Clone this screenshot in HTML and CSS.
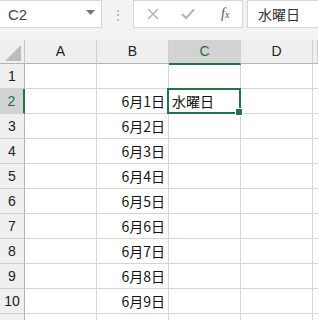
FILE: index.html
```html
<!DOCTYPE html>
<html lang="ja">
<head>
  <meta charset="UTF-8">
  <meta name="viewport" content="width=device-width, initial-scale=1.0">
  <title>Sheet</title>
  <link rel="stylesheet" href="styles.css">
</head>
<body>
  <div class="toolbar">
    <div class="name-box">
      <span>C2</span>
      <svg class="caret" width="9" height="5" viewBox="0 0 9 5"><polygon points="0,0 9,0 4.5,5" fill="#777"/></svg>
    </div>
    <div class="grip">⋮</div>
    <div class="formula-btns">
      <svg width="12" height="12" viewBox="0 0 12 12"><path d="M1 1 L11 11 M11 1 L1 11" stroke="#b5b5b5" stroke-width="1.6" fill="none"/></svg>
      <svg width="14" height="12" viewBox="0 0 14 12"><path d="M1 6 L5 10 L13 1.5" stroke="#b5b5b5" stroke-width="2" fill="none"/></svg>
      <span class="fx">f<sub>x</sub></span>
    </div>
    <div class="formula-input">水曜日</div>
  </div>

  <div class="sheet">
    <div class="grid" id="grid"></div>
    <div class="selection"><span class="handle"></span></div>
  </div>

  <script>
    const grid = document.getElementById('grid');
    const cols = ['A', 'B', 'C', 'D', ''];

    let html = '<div class="corner"><svg width="16" height="16" viewBox="0 0 16 16"><polygon points="16,0 16,16 0,16" fill="#bdbdbd"/></svg></div>';
    cols.forEach(c => {
      html += `<div class="col-head${c === 'C' ? ' active' : ''}">${c}</div>`;
    });

    for (let r = 1; r <= 11; r++) {
      html += `<div class="row-head${r === 2 ? ' active' : ''}">${r <= 10 ? r : ''}</div>`;
      cols.forEach(c => {
        let text = '';
        let cls = 'cell';
        if (c === 'B' && r >= 2 && r <= 10) {
          text = `6月${r - 1}日`;
          cls += ' num';
        }
        if (c === 'C' && r === 2) text = '水曜日';
        html += `<div class="${cls}">${text}</div>`;
      });
    }
    grid.innerHTML = html;
  </script>
</body>
</html>
```

FILE: styles.css
```css
html, body {
  overflow: hidden;
}

body {
  margin: 0;
  width: 318px;
  height: 320px;
  background: #fff;
  font-family: "Noto Sans CJK JP", "Noto Sans", sans-serif;
}

.toolbar {
  height: 40px;
  background: #f3f3f3;
  display: flex;
  align-items: flex-start;
}

.name-box {
  width: 102px;
  height: 28px;
  background: #fff;
  border: 1px solid #d6d6d6;
  border-left: none;
  display: flex;
  align-items: center;
  justify-content: space-between;
  padding: 0 6px 0 8px;
  box-sizing: border-box;
  font-family: "Liberation Sans", "Noto Sans", sans-serif;
  font-size: 15px;
  color: #444;
}

.caret {
  margin-top: -4px;
}

.grip {
  width: 31px;
  height: 29px;
  line-height: 28px;
  text-align: center;
  color: #b0b0b0;
  font-size: 14px;
}

.formula-btns {
  width: 110px;
  height: 28px;
  background: #fff;
  border: 1px solid #d6d6d6;
  box-sizing: border-box;
  display: flex;
  align-items: center;
  padding-left: 13px;
  gap: 22px;
}

.fx {
  font-family: "Liberation Serif", serif;
  font-style: italic;
  font-size: 14px;
  color: #555;
  margin-left: 4px;
}

.fx sub {
  font-size: 10px;
  vertical-align: 0;
}

.formula-input {
  margin-left: 4px;
  flex: 1;
  height: 28px;
  background: #fff;
  border: 1px solid #d6d6d6;
  border-right: none;
  box-sizing: border-box;
  padding-left: 10px;
  line-height: 26px;
  font-size: 14px;
  color: #333;
}

.sheet {
  position: relative;
  height: 280px;
  overflow: hidden;
}

.grid {
  display: grid;
  grid-template-columns: 25px 72px 72px 72px 72px 5px;
  grid-template-rows: 24px repeat(11, 25px);
}

.corner {
  background: #efefef;
  border-right: 1px solid #c8c8c8;
  border-bottom: 1px solid #b4b4b4;
  display: flex;
  align-items: flex-end;
  justify-content: flex-end;
  padding: 0 3px 2px 0;
}

.col-head {
  background: #efefef;
  border-right: 1px solid #d0d0d0;
  border-bottom: 1px solid #b4b4b4;
  text-align: center;
  line-height: 23px;
  font-family: "Liberation Sans", sans-serif;
  font-size: 14px;
  color: #222;
}

.col-head.active {
  background: #d2d2d2;
  color: #217346;
  border-bottom: 2px solid #217346;
  margin-bottom: -1px;
  position: relative;
}

.row-head {
  background: #efefef;
  border-right: 1px solid #b4b4b4;
  border-bottom: 1px solid #d0d0d0;
  text-align: center;
  line-height: 24px;
  font-family: "Liberation Sans", sans-serif;
  font-size: 14px;
  color: #222;
}

.row-head.active {
  background: #d2d2d2;
  color: #217346;
  border-right: 2px solid #217346;
}

.cell {
  border-right: 1px solid #d4d4d4;
  border-bottom: 1px solid #d4d4d4;
  font-size: 14px;
  line-height: 24px;
  color: #111;
  padding: 0 3px;
  white-space: nowrap;
}

.cell.num {
  text-align: right;
}

.selection {
  position: absolute;
  left: 167px;
  top: 48px;
  width: 74px;
  height: 26px;
  border: 2px solid #217346;
  box-sizing: border-box;
  pointer-events: none;
}

.handle {
  position: absolute;
  right: -4px;
  bottom: -4px;
  width: 6px;
  height: 6px;
  background: #217346;
  border: 1px solid #fff;
}
```
